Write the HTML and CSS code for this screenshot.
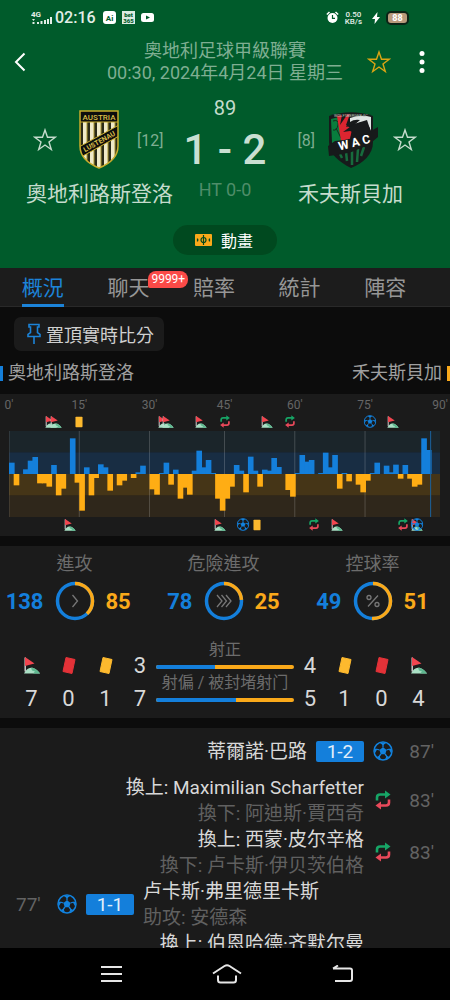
FILE: index.html
```html
<!DOCTYPE html>
<html lang="zh-Hant">
<head>
    <meta charset="UTF-8">
    <meta name="viewport" content="width=device-width, initial-scale=1.0">
    <title>奧地利路斯登洛 1 - 2 禾夫斯貝加</title>
    <link rel="stylesheet" href="styles.css">
</head>
<body>
    <!-- Shared icons -->
    <svg class="sprite" aria-hidden="true">
        <symbol id="star" viewBox="0 0 24 24">
            <path d="M12 2l2.500 7.300h7.700l-6.200 4.700 2.300 7.500L12 17l-6.300 4.500L8 14 1.800 9.300h7.700z" fill="none" stroke="currentColor" stroke-width="1.400"/>
        </symbol>
        <symbol id="corner" viewBox="0 0 16 17">
            <path d="M0 16.500c2-3.500 4-5.500 7-5.700 4 0 6.500 2.500 9 5.700z" fill="#a9dfc4"/>
            <path d="M7 10.800c4 0 6.500 2.500 9 5.700H9l2-2-3-1z" fill="#5fb890"/>
            <path d="M1.200.500v14" stroke="#d5d5d5" stroke-width="1.400"/>
            <path d="M1 0l9.500 6.500L1 9z" fill="#f24650"/>
        </symbol>
        <symbol id="card" viewBox="0 0 14 17">
            <path d="M4 .5l9 2-3 14-9-2z" fill="currentColor" stroke="currentColor" stroke-linejoin="round"/>
        </symbol>
        <symbol id="flat-card" viewBox="0 0 14 17">
            <rect x="2" y="1" width="10" height="15" rx="1" fill="currentColor"/>
        </symbol>
        <symbol id="ball" viewBox="0 0 20 20">
            <circle cx="10" cy="10" r="9" fill="none" stroke="#1282de" stroke-width="1.500"/>
            <path d="M10 6.300l3.600 2.600-1.400 4.300H7.800L6.400 8.900z" fill="#1282de"/>
            <path d="M10 6.500V3M13.500 9l3.300-1M12.100 13l2 2.800M7.900 13l-2 2.800M6.500 9L3.200 8" stroke="#1282de" stroke-width="1.300"/>
            <path d="M6.500 1.700h7L10 4.200zM18.800 7.300l-.3 5.700-2.700-4.700zM1.200 7.300l.3 5.700 2.700-4.700zM16.500 16l-4.500 2.800 1.500-4zM3.500 16L8 18.800l-1.500-4z" fill="#1282de"/>
        </symbol>
        <symbol id="sub" viewBox="0 0 20 20">
            <path d="M4 10.500V7.500q0-3 3-3h6" fill="none" stroke="#17a566" stroke-width="2.600"/>
            <path d="M12 .5l5.500 4L12 8.500z" fill="#17a566"/>
            <path d="M16 9.500v3q0 3-3 3H7" fill="none" stroke="#e8495a" stroke-width="2.600"/>
            <path d="M8 11.500l-5.500 4 5.500 4z" fill="#e8495a"/>
        </symbol>
    </svg>

    <div class="app">
        <header class="header">
            <div class="status-bar">
                <div class="status-left">
                    <svg width="22" height="14" viewBox="0 0 22 14" fill="#e3eee7">
                        <text x="0" y="6" font-size="8" font-weight="700">4G</text>
                        <path d="M1 8h3l-1.500 2zM1.500 11h2v2h-2zM6 11h2v2H6zM9.500 10h2v3h-2zM13 9h2v4h-2zM16 8h2v5h-2zM19 6h2v7h-2z"/>
                    </svg>
                    <span class="clock">02:16</span>
                    <svg width="13" height="13" viewBox="0 0 13 13">
                        <rect width="13" height="13" rx="3" fill="#fff"/>
                        <text x="6.500" y="9.500" font-size="8" font-weight="700" text-anchor="middle" fill="#005b2b">Ai</text>
                    </svg>
                    <svg width="13" height="13" viewBox="0 0 13 13">
                        <rect width="13" height="13" fill="#dcebe1"/>
                        <text x="6.500" y="6" font-size="6" font-weight="900" text-anchor="middle" fill="#005b2b">bet</text>
                        <text x="6.500" y="12" font-size="6" font-weight="900" text-anchor="middle" fill="#005b2b">365</text>
                    </svg>
                    <svg width="13" height="13" viewBox="0 0 13 13">
                        <rect y="2" width="13" height="9" rx="2.500" fill="#fff"/>
                        <path d="M5 4.500l4 2-4 2z" fill="#005b2b"/>
                    </svg>
                </div>
                <div class="status-right">
                    <svg width="13" height="13" viewBox="0 0 13 13">
                        <circle cx="6.500" cy="7" r="5" fill="#fff"/>
                        <path d="M.8 3.500L3.500 1M12.200 3.500L9.500 1" stroke="#fff" stroke-width="1.500"/>
                        <path d="M6.500 4v3.300h2.500" fill="none" stroke="#005b2b" stroke-width="1.200"/>
                    </svg>
                    <span class="net-speed">0.50<br>KB/s</span>
                    <svg class="bolt" width="8" height="12" viewBox="0 0 8 12"><path d="M5.500 0L0 7h3L2.500 12 8 5H5z" fill="#fff"/></svg>
                    <span class="battery">88</span>
                </div>
            </div>

            <div class="top-bar">
                <button class="icon-btn back" aria-label="返回">
                    <svg width="12" height="20" viewBox="0 0 12 20"><path d="M10.500 1.500L2 10l8.500 8.500" fill="none" stroke="#fff" stroke-width="2"/></svg>
                </button>
                <h1 class="title">奧地利足球甲級聯賽<br>00:30, 2024年4月24日 星期三</h1>
                <div class="top-actions">
                    <button class="icon-btn gold" aria-label="收藏"><svg width="24" height="24"><use href="#star"/></svg></button>
                    <button class="icon-btn" aria-label="更多">
                        <svg width="6" height="22" viewBox="0 0 6 22" fill="#fff"><circle cx="3" cy="2.500" r="2.500"/><circle cx="3" cy="11" r="2.500"/><circle cx="3" cy="19.500" r="2.500"/></svg>
                    </button>
                </div>
            </div>

            <div class="scoreboard">
                <div class="team home">
                    <div class="team-row">
                        <button class="icon-btn" aria-label="收藏主隊"><svg width="24" height="24"><use href="#star"/></svg></button>
                        <svg class="crest" viewBox="0 0 50 60">
                            <defs><clipPath id="shield"><path d="M6 1h38v35c0 11-9 18-19 22C15 54 6 47 6 36z"/></clipPath></defs>
                            <g clip-path="url(#shield)">
                                <rect width="50" height="60" fill="#2a2a18"/>
                                <path d="M11 12v40M18 12v44M25 12v46M32 12v44M39 12v40" stroke="#efe9c8" stroke-width="4"/>
                                <path d="M13 12v40M20 12v44M27 12v46M34 12v44M41 12v40" stroke="#a79331" stroke-width="1"/>
                                <rect x="6" y="1" width="38" height="11" fill="#0d0d0d"/>
                                <path d="M5 37L45 15v11L7 47z" fill="#0d0d0d" stroke="#c9ad2c"/>
                            </g>
                            <path d="M6 12h38" stroke="#c9ad2c"/>
                            <path d="M6 1h38v35c0 11-9 18-19 22C15 54 6 47 6 36z" fill="none" stroke="#c9ad2c" stroke-width="1.500"/>
                            <text x="25" y="10" font-size="8" font-weight="500" text-anchor="middle" fill="#d8bd49">AUSTRIA</text>
                            <text x="25" y="34" font-size="7" font-weight="700" text-anchor="middle" fill="#d8bd49" transform="rotate(-29 25 31)">LUSTENAU</text>
                        </svg>
                        <span class="rank">[12]</span>
                    </div>
                    <h2 class="team-name">奧地利路斯登洛</h2>
                </div>
                <div class="score-box">
                    <div class="minute">89</div>
                    <div class="score">1 - 2</div>
                    <div class="half-time">HT 0-0</div>
                </div>
                <div class="team away">
                    <div class="team-row">
                        <button class="icon-btn" aria-label="收藏客隊"><svg width="24" height="24"><use href="#star"/></svg></button>
                        <svg class="crest" viewBox="0 0 50 60">
                            <path d="M1 6c14-5 30-5 44 0v26c0 13-10 21-22 26C11 52 1 44 1 32z" fill="#171a1b"/>
                            <path d="M3 9l8-2 3 15v9l-10 2z" fill="#087d3d"/>
                            <path d="M5 11q6-2 5 4t-5 5M8 18l5 10" fill="none" stroke="#172b20"/>
                            <path d="M9 6l13-2-4 11 6 4-2 10-9 2z" fill="#dd2530"/>
                            <path d="M14 5l-2 10 7-10zM24 6l-6 11 8-2z" fill="#171a1b"/>
                            <path d="M22 8q11-4 21-1v14q-3-9-9-9-6 1-10 5l8-7q-6-1-10 2z" fill="#dfe5e3"/>
                            <path d="M15 22l11-8 13-4 4 12-14 9-7-4 7-3-7-3z" fill="#171a1b"/>
                            <path d="M18 42l1 9M24 41v14M30 39l-1 13M36 37l-3 9M12 44l2 4" stroke="#176b3d" stroke-width="2.500"/>
                            <path d="M0 36l7-5q19-1 36-10l7-4v10l-6 5Q27 44 1 46z" fill="#171a1b"/>
                            <text x="26" y="37" font-size="12" font-weight="700" text-anchor="middle" fill="#fff" transform="rotate(-14 25 32)">W A C</text>
                            <text x="23" y="7" font-size="4" text-anchor="middle" fill="#b9c4bd">WOLFSBERGER AC</text>
                        </svg>
                        <span class="rank">[8]</span>
                    </div>
                    <h2 class="team-name">禾夫斯貝加</h2>
                </div>
            </div>

            <button class="animation-btn">
                <svg width="17" height="12" viewBox="0 0 17 12">
                    <rect width="17" height="12" rx="1" fill="#faa91a"/>
                    <path d="M8.500 1v10M2 6h1.500M13.500 6H15" stroke="#00491f" stroke-width="1.200"/>
                    <circle cx="8.500" cy="6" r="2.500" fill="none" stroke="#00491f" stroke-width="1.200"/>
                    <path d="M2.500 4.500v3M14.500 4.500v3" stroke="#00491f" stroke-width="1.200"/>
                </svg>
                動畫
            </button>
        </header>

        <nav class="tabs">
            <a href="#" class="tab active"><span>概況</span></a>
            <a href="#" class="tab"><span>聊天<em class="tab-badge">9999+</em></span></a>
            <a href="#" class="tab"><span>賠率</span></a>
            <a href="#" class="tab"><span>統計</span></a>
            <a href="#" class="tab"><span>陣容</span></a>
        </nav>

        <main class="content">
            <button class="pin-btn">
                <svg width="14" height="22" viewBox="0 0 14 22" fill="none" stroke="#1c83d8" stroke-width="1.600">
                    <path d="M2 1.500h10v2.500h-1.500v5.500l2.500 2v2H1v-2l2.500-2V4H2zM7 13.500V21"/>
                </svg>
                置頂實時比分
            </button>

            <div class="legend">
                <span class="legend-home">奧地利路斯登洛</span>
                <span class="legend-away">禾夫斯貝加</span>
            </div>

            <section class="panel chart">
                <div class="chart-row" id="chart-labels"></div>
                <div class="chart-row events" id="home-events"></div>
                <svg class="plot" id="plot" viewBox="0 0 92 258" preserveAspectRatio="none">
                    <rect width="92" height="64" fill="#1b252a"/>
                    <rect y="64" width="92" height="65" fill="#182d43"/>
                    <rect y="129" width="92" height="65" fill="#453517"/>
                    <rect y="194" width="92" height="64" fill="#2f271b"/>
                </svg>
                <div class="chart-row events" id="away-events"></div>
            </section>

            <section class="panel stats">
                <div class="dials">
                    <div class="dial">
                        <h3>進攻</h3>
                        <b class="blue">138</b>
                        <svg viewBox="0 0 40 40">
                            <circle cx="20" cy="20" r="17.500" stroke="#147fdb"/>
                            <circle cx="20" cy="20" r="17.500" stroke="#faa91a" pathLength="100" stroke-dasharray="38 62" transform="rotate(-90 20 20)"/>
                            <path d="M17.500 14l5 6-5 6"/>
                        </svg>
                        <b class="orange">85</b>
                    </div>
                    <div class="dial">
                        <h3>危險進攻</h3>
                        <b class="blue">78</b>
                        <svg viewBox="0 0 40 40">
                            <circle cx="20" cy="20" r="17.500" stroke="#147fdb"/>
                            <circle cx="20" cy="20" r="17.500" stroke="#faa91a" pathLength="100" stroke-dasharray="24 76" transform="rotate(-90 20 20)"/>
                            <path d="M13 14l5 6-5 6M17.500 14l5 6-5 6M22 14l5 6-5 6"/>
                        </svg>
                        <b class="orange">25</b>
                    </div>
                    <div class="dial">
                        <h3>控球率</h3>
                        <b class="blue">49</b>
                        <svg viewBox="0 0 40 40">
                            <circle cx="20" cy="20" r="17.500" stroke="#147fdb"/>
                            <circle cx="20" cy="20" r="17.500" stroke="#faa91a" pathLength="100" stroke-dasharray="51 49" transform="rotate(-90 20 20)"/>
                            <path d="M25 14.500l-10 11M18 16.500a2 2 0 1 1-4 0 2 2 0 0 1 4 0zM26 23.500a2 2 0 1 1-4 0 2 2 0 0 1 4 0z"/>
                        </svg>
                        <b class="orange">51</b>
                    </div>
                </div>

                <div class="counts">
                    <div class="count"><svg><use href="#corner"/></svg><span>7</span></div>
                    <div class="count red"><svg><use href="#card"/></svg><span>0</span></div>
                    <div class="count yellow"><svg><use href="#card"/></svg><span>1</span></div>
                    <div class="count"><span>3</span><span>7</span></div>
                    <div class="shots">
                        <div class="shots-label">射正</div>
                        <div class="bar"><i style="width: 43%"></i></div>
                        <div class="shots-label">射偏 / 被封堵射门</div>
                        <div class="bar"><i style="width: 58%"></i></div>
                    </div>
                    <div class="count"><span>4</span><span>5</span></div>
                    <div class="count yellow"><svg><use href="#card"/></svg><span>1</span></div>
                    <div class="count red"><svg><use href="#card"/></svg><span>0</span></div>
                    <div class="count"><svg><use href="#corner"/></svg><span>4</span></div>
                </div>
            </section>

            <section class="panel timeline">
                <div class="event away-event">
                    <time>87'</time>
                    <svg><use href="#ball"/></svg>
                    <span class="goal">1-2</span>
                    <div class="players"><p>蒂爾諾·巴路</p></div>
                </div>
                <div class="event away-event">
                    <time>83'</time>
                    <svg><use href="#sub"/></svg>
                    <div class="players"><p>換上: Maximilian Scharfetter</p><p class="dim">換下: 阿迪斯·賈西奇</p></div>
                </div>
                <div class="event away-event">
                    <time>83'</time>
                    <svg><use href="#sub"/></svg>
                    <div class="players"><p>換上: 西蒙·皮尔辛格</p><p class="dim">換下: 卢卡斯·伊贝茨伯格</p></div>
                </div>
                <div class="event">
                    <time>77'</time>
                    <svg><use href="#ball"/></svg>
                    <span class="goal">1-1</span>
                    <div class="players"><p>卢卡斯·弗里德里卡斯</p><p class="dim">助攻: 安德森</p></div>
                </div>
                <div class="event away-event last">
                    <time></time>
                    <svg></svg>
                    <div class="players"><p>換上: 伯恩哈德·齐默尔曼</p></div>
                </div>
            </section>
        </main>

        <footer class="system-nav">
            <button class="icon-btn" aria-label="選單"><svg width="21" height="18" viewBox="0 0 21 18"><path d="M0 2h21M0 9h21M0 16h21"/></svg></button>
            <button class="icon-btn" aria-label="主畫面"><svg width="30" height="20" viewBox="0 0 30 20"><path d="M1 9.500L12.500 2q2.500-1.500 5 0L29 9.500M6 11.500V16q0 2.500 2.500 2.500h13Q24 18.500 24 16v-4.500"/></svg></button>
            <button class="icon-btn" aria-label="返回鍵"><svg width="21" height="18" viewBox="0 0 21 18"><path d="M1 3.500h17q2 0 2 2V14q0 2-2 2H3M6 .5L1 3.500"/></svg></button>
        </footer>
    </div>

    <script>
        // Pressure per minute: positive is home, negative is away
        const pressure = [
            34, -34, 0, 14, 40, 51, -28, -28, -38, 27, -64, -44, 0, 107, -26,
            -110, 20, -64, -12, 29, 20, -50, 0, -34, -20, 0, -12, 5, 25, 0,
            -46, -62, 3, 34, -32, 13, -74, -41, -62, 10, 70, 20, 42, 3, -74, -110,
            -74, -38, 27, 10, -55, 52, 10, -38, 13, 10, 48, 21, 0, -48, -68,
            3, 57, 37, 42, 0, 3, 64, 20, 57, -44, 3, -22, 0, -32, -55,
            -20, 3, 34, 0, 25, 5, 28, -14, 27, -14, -38, -32, 107, 72
        ];
        const slots = 92;
        const ticks = [[0, "0'"], [15, "15'"], [30, "30'"], [46, "45'"], [61, "60'"], [76, "75'"], [92, "90'"]];
        const homeEvents = [[9, 'corner'], [10, 'corner'], [15, 'flat-card'], [33, 'corner'], [34, 'corner'], [41, 'corner'],
            [46, 'sub'], [55, 'corner'], [60, 'sub'], [77, 'ball'], [82, 'corner']];
        const awayEvents = [[13, 'corner'], [45, 'corner'], [50, 'ball'], [53, 'flat-card'], [65, 'sub'], [70, 'corner'],
            [84, 'sub'], [87, 'corner'], [87, 'ball']];

        function left(slot) {
            return (slot / slots * 100).toFixed(2) + '%';
        }

        function showEvents(id, events) {
            document.getElementById(id).innerHTML = events.map(([slot, icon]) =>
                `<svg class="mark ${icon}" style="left: ${left(slot)}"><use href="#${icon}"/></svg>`).join('');
        }

        function drawPlot() {
            let shapes = '';
            ticks.slice(0, 6).forEach(([slot]) => {
                shapes += `<path d="M${slot} 0v258" class="grid-line"/>`;
            });
            pressure.forEach((value, i) => {
                if (value > 0) shapes += `<rect x="${i}" y="${129 - value}" width="1.2" height="${value}" fill="#147fdb"/>`;
                if (value < 0) shapes += `<rect x="${i}" y="129" width="1.2" height="${-value}" fill="#ffad14"/>`;
            });
            shapes += '<path d="M90 0v258" class="live-line"/>';
            document.getElementById('plot').innerHTML += shapes;
        }

        document.getElementById('chart-labels').innerHTML = ticks.map(([slot, label]) =>
            `<span class="tick" style="left: ${left(slot)}">${label}</span>`).join('');
        showEvents('home-events', homeEvents);
        showEvents('away-events', awayEvents);
        drawPlot();
    </script>
</body>
</html>
```

FILE: styles.css
```css
* {
    box-sizing: border-box;
}
body {
    margin: 0;
    font-family: Roboto, "Noto Sans CJK TC", sans-serif;
    background-color: #0c0c0c;
    color: #d8d8d8;
}
h1, h2, h3, p {
    margin: 0;
    font-weight: 400;
}
button {
    border: none;
    font-family: inherit;
    cursor: pointer;
}
svg {
    display: block;
    flex-shrink: 0;
}
.sprite {
    position: absolute;
    width: 0;
    height: 0;
}
.app {
    display: flex;
    flex-direction: column;
    height: 100vh;
}
.icon-btn {
    padding: 0;
    background: none;
    color: #c5dccd;
}
.gold {
    color: #dba514;
}

/* Header */
.header {
    display: flex;
    flex-direction: column;
    flex-shrink: 0;
    padding-bottom: 13px;
    background-color: #005b2b;
}
.status-bar {
    display: flex;
    justify-content: space-between;
    align-items: center;
    height: 35px;
    padding: 0 41px 0 31px;
    color: #e3eee7;
}
.status-left, .status-right {
    display: flex;
    align-items: center;
    gap: 6px;
}
.clock {
    margin: 0 1px 0 -4px;
    font-size: 16px;
    font-weight: 500;
}
.net-speed {
    font-size: 8px;
    line-height: 7px;
    font-weight: 500;
    text-align: center;
}
.bolt {
    margin-left: 4px;
}
.battery {
    width: 23px;
    height: 14px;
    border: 2px solid #0c2416;
    border-radius: 5px;
    background-color: #b99a7c;
    color: #fff;
    font-size: 9px;
    line-height: 10px;
    font-weight: 700;
    text-align: center;
}
.top-bar {
    display: grid;
    grid-template-columns: 1fr auto 1fr;
    align-items: center;
    padding: 5px 25px 12px 14px;
}
.top-bar .back {
    justify-self: start;
}
.title {
    padding-left: 11px;
    font-size: 18px;
    line-height: 22px;
    text-align: center;
    color: #7fae92;
}
.top-actions {
    display: flex;
    justify-content: flex-end;
    align-items: center;
    gap: 28px;
}
.scoreboard {
    display: grid;
    grid-template-columns: 1fr 102px 1fr;
    padding: 0 25px;
    text-align: center;
}
.team-row {
    display: flex;
    align-items: center;
    height: 60px;
    margin-top: 14px;
    padding: 0 8px;
}
.away .team-row {
    flex-direction: row-reverse;
}
.crest {
    width: 50px;
    height: 60px;
    margin: 0 13px 0 17px;
}
.away .crest {
    margin: 0 15px 0 13px;
}
.rank {
    font-size: 16px;
    color: #7fae92;
}
.team-name {
    margin-top: 10px;
    font-size: 21px;
    line-height: 28px;
    white-space: nowrap;
    color: #c5dccd;
}
.minute {
    font-size: 20px;
    line-height: 24px;
    color: #c5dccd;
}
.score {
    margin: 6px 0 4px;
    font-size: 42px;
    line-height: 48px;
    font-weight: 500;
    white-space: nowrap;
    color: #c9dfd1;
}
.half-time {
    font-size: 18px;
    line-height: 24px;
    color: #4f8d69;
}
.animation-btn {
    display: flex;
    align-items: center;
    align-self: center;
    gap: 9px;
    height: 30px;
    margin-top: 17px;
    padding: 0 24px 0 22px;
    border-radius: 15px;
    background-color: #00491f;
    color: #fff;
    font-size: 16px;
}

/* Tabs */
.tabs {
    display: flex;
    flex-shrink: 0;
    height: 39px;
    padding-right: 22px;
    border-bottom: 1px solid #292929;
    background-color: #1c1c1c;
}
.tab {
    display: flex;
    flex: 1;
    justify-content: center;
    color: #969696;
    font-size: 21px;
    line-height: 40px;
    text-decoration: none;
}
.tab span {
    position: relative;
}
.tab.active {
    color: #1c83d8;
}
.tab.active span {
    height: 39px;
    border-bottom: 3px solid #1c83d8;
}
.tab-badge {
    position: absolute;
    top: 3px;
    left: 41px;
    padding: 0 3px;
    border-radius: 8px 8px 8px 2px;
    background-color: #fb4a47;
    color: #fff;
    font-size: 12px;
    line-height: 17px;
    font-style: normal;
}

/* Content */
.content {
    flex: 1;
    min-height: 0;
    overflow: hidden;
}
.pin-btn {
    display: flex;
    align-items: center;
    gap: 5px;
    height: 34px;
    margin: 10px 14px;
    padding: 0 10px 0 13px;
    border-radius: 7px;
    background-color: #1b1b1b;
    color: #d0d0d0;
    font-size: 18px;
}
.legend {
    display: flex;
    justify-content: space-between;
    margin-bottom: 9px;
    color: #a0a0a0;
    font-size: 18px;
    line-height: 24px;
}
.legend span {
    display: flex;
    align-items: center;
    gap: 5px;
}
.legend-home::before, .legend-away::after {
    content: "";
    width: 3px;
    height: 15px;
    background-color: #147fdb;
}
.legend-away::after {
    background-color: #faa91a;
}
.panel {
    margin-bottom: 10px;
    background-color: #1b1b1b;
}

/* Pressure chart */
.chart {
    padding: 3px 10px 2px 9px;
}
.chart-row {
    position: relative;
    height: 17px;
}
.tick {
    position: absolute;
    transform: translateX(-50%);
    color: #666;
    font-size: 12px;
    line-height: 17px;
}
.mark {
    position: absolute;
    top: 2px;
    width: 12px;
    height: 12px;
    transform: translateX(-50%);
}
.mark.ball, .mark.sub {
    top: 1px;
    width: 13px;
    height: 13px;
}
.flat-card {
    color: #fdb92e;
}
.plot {
    width: 100%;
    height: 86px;
}
.grid-line, .live-line {
    stroke: rgba(255, 255, 255, 0.18);
    vector-effect: non-scaling-stroke;
}
.live-line {
    stroke: #1b629d;
}

/* Stats */
.stats {
    padding: 7px 0 3px;
}
.dials {
    display: grid;
    grid-template-columns: repeat(3, 1fr);
    padding-right: 3px;
}
.dial {
    display: grid;
    grid-template-columns: 1fr 40px 1fr;
    align-items: center;
    column-gap: 11px;
    row-gap: 6px;
}
.dial h3 {
    grid-column: 1 / 4;
    font-size: 18px;
    line-height: 22px;
    text-align: center;
    color: #6c6c6c;
}
.dial svg {
    width: 40px;
    height: 40px;
    fill: none;
    stroke: #777;
    stroke-width: 1.3;
}
.dial circle {
    stroke-width: 3.5;
}
.dial b {
    font-size: 22px;
}
.blue {
    color: #147fdb;
    text-align: right;
}
.orange {
    color: #faa91a;
}
.counts {
    display: grid;
    grid-template-columns: 37px 37px 37px 32px 1fr 32px 37px 37px 37px;
    margin-top: 19px;
    padding: 0 13px;
}
.count {
    display: grid;
    grid-template-rows: 33px 33px;
    place-items: center;
    padding-top: 9px;
    font-size: 22px;
}
.count svg {
    width: 16px;
    height: 17px;
}
.red svg {
    color: #e33238;
}
.yellow svg {
    color: #fdb92e;
}
.shots-label {
    font-size: 16px;
    line-height: 20px;
    text-align: center;
    white-space: nowrap;
    color: #6c6c6c;
}
.bar {
    height: 4px;
    margin: 5px 0 4px;
    border-radius: 2px;
    background-color: #faa91a;
    overflow: hidden;
}
.bar i {
    display: block;
    height: 100%;
    background-color: #147fdb;
}

/* Timeline */
.event {
    display: flex;
    align-items: center;
    gap: 9px;
    min-height: 46px;
    padding: 0 16px;
    font-size: 19px;
    line-height: 27px;
}
.away-event {
    flex-direction: row-reverse;
    text-align: right;
}
.event.last {
    align-items: flex-start;
}
.event time {
    width: 25px;
    color: #636363;
}
.event svg {
    width: 20px;
    height: 20px;
    margin-left: 7px;
}
.away-event svg {
    margin: 0 7px 0 0;
}
.goal {
    width: 48px;
    border-radius: 2px;
    background-color: #147fdb;
    color: #e1eefa;
    line-height: 21px;
    text-align: center;
}
.players {
    white-space: nowrap;
}
.players p {
    height: 26px;
}
.players .dim {
    color: #606060;
}

/* Android navigation bar */
.system-nav {
    display: flex;
    flex-shrink: 0;
    justify-content: center;
    align-items: center;
    gap: 90px;
    height: 52px;
    padding-left: 4px;
    background-color: #000;
}
.system-nav svg {
    fill: none;
    stroke: #e6e6e6;
    stroke-width: 2;
}
```
